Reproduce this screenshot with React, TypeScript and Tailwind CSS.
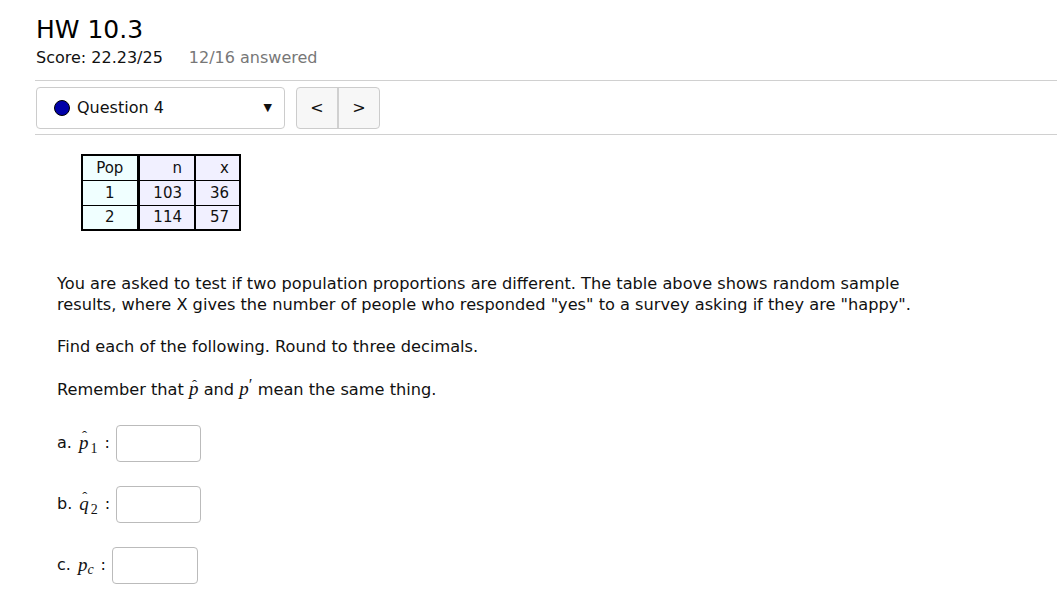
import React from 'react';

const Hat: React.FC<{ letter: string; sub?: string }> = ({ letter, sub }) => (
  <span className="font-['Liberation_Serif',serif] italic text-[19px]">
    <span className="relative inline-block">
      {letter}
      <span className="absolute left-[3px] top-[0px] not-italic text-[15px] leading-none">ˆ</span>
    </span>
    {sub && <span className="not-italic text-[14px] relative top-[4px] ml-[2px]">{sub}</span>}
  </span>
);

const AnswerRow: React.FC<{ label: string; math: React.ReactNode; boxWidth: string }> = ({ label, math, boxWidth }) => (
  <div className="flex items-center h-[38px]">
    <span>{label}</span>
    <span className="ml-[7px]">{math}</span>
    <span className="ml-[7px] mr-[6px]">:</span>
    <div className={`${boxWidth} h-[37px] border border-[#bbb] rounded-[4px] bg-white`} />
  </div>
);

export default function App() {
  return (
    <div className="min-h-screen bg-white text-[#111] font-['DejaVu_Sans',sans-serif] text-[16px]">
      <div className="pl-[36px] pt-[15px]">
        <h1 className="text-[25px] leading-[30px] text-black">HW 10.3</h1>
        <div className="flex mt-[3px] text-[16px] leading-[20px]">
          <span>Score: 22.23/25</span>
          <span className="ml-[26px] text-[#777]">12/16 answered</span>
        </div>
      </div>

      <div className="ml-[35px] mt-[12px] border-t border-b border-[#d0d0d0] pt-[6px] pb-[5px] pl-[1px] flex gap-[11px]">
        <div className="w-[249px] h-[42px] border border-[#ccc] rounded-[4px] flex items-center pl-[17px] pr-[10px]">
          <span className="w-[16px] h-[16px] rounded-full bg-[#0000a8] border border-black" />
          <span className="ml-[7px] text-[16px]">Question 4</span>
          <span className="ml-auto text-[11px] mr-[2px]">▼</span>
        </div>
        <div className="flex h-[42px] border border-[#ccc] rounded-[4px] bg-[#f7f7f7]">
          <div className="w-[42px] flex items-center justify-center border-r-2 border-[#d0d0d0] text-[16px]">&lt;</div>
          <div className="w-[40px] flex items-center justify-center text-[16px]">&gt;</div>
        </div>
      </div>

      <div className="pl-[57px]">
        <table className="ml-[24px] mt-[19px] border-collapse border-2 border-black text-[15px] leading-[20px]">
          <tbody>
            <tr className="h-[25px]">
              <td className="w-[56px] bg-[#f0ffff] border border-black border-r-[3px] text-center">Pop</td>
              <td className="w-[57px] bg-[#f1f0ff] border border-black border-r-2 text-right pr-[12px]">n</td>
              <td className="w-[45px] bg-[#f1f0ff] border border-black text-right pr-[10px]">x</td>
            </tr>
            <tr className="h-[25px]">
              <td className="bg-[#f0ffff] border border-black border-r-[3px] text-center">1</td>
              <td className="bg-[#f1f0ff] border border-black border-r-2 text-right pr-[12px]">103</td>
              <td className="bg-[#f1f0ff] border border-black text-right pr-[10px]">36</td>
            </tr>
            <tr className="h-[25px]">
              <td className="bg-[#f0ffff] border border-black border-r-[3px] text-center">2</td>
              <td className="bg-[#f1f0ff] border border-black border-r-2 text-right pr-[12px]">114</td>
              <td className="bg-[#f1f0ff] border border-black text-right pr-[10px]">57</td>
            </tr>
          </tbody>
        </table>

        <div className="mt-[42px] leading-[21px] text-[16.2px]">
          <p>
            You are asked to test if two population proportions are different. The table above shows random sample
            <br />
            results, where X gives the number of people who responded "yes" to a survey asking if they are "happy".
          </p>
          <p className="mt-[21px]">Find each of the following. Round to three decimals.</p>
          <p className="mt-[21px]">
            Remember that <Hat letter="p" /> and{' '}
            <span className="font-['Liberation_Serif',serif] italic text-[19px]">p</span>
            <span className="font-['Liberation_Serif',serif] text-[17px] relative top-[-5px]">′</span> mean the same thing.
          </p>
        </div>

        <div className="mt-[24px] flex flex-col gap-[23px]">
          <AnswerRow label="a." math={<Hat letter="p" sub="1" />} boxWidth="w-[85px]" />
          <AnswerRow label="b." math={<Hat letter="q" sub="2" />} boxWidth="w-[85px]" />
          <AnswerRow
            label="c."
            math={
              <span className="font-['Liberation_Serif',serif] italic text-[19px]">
                p<span className="text-[14px] relative top-[3px]">c</span>
              </span>
            }
            boxWidth="w-[86px]"
          />
        </div>
      </div>
    </div>
  );
}
